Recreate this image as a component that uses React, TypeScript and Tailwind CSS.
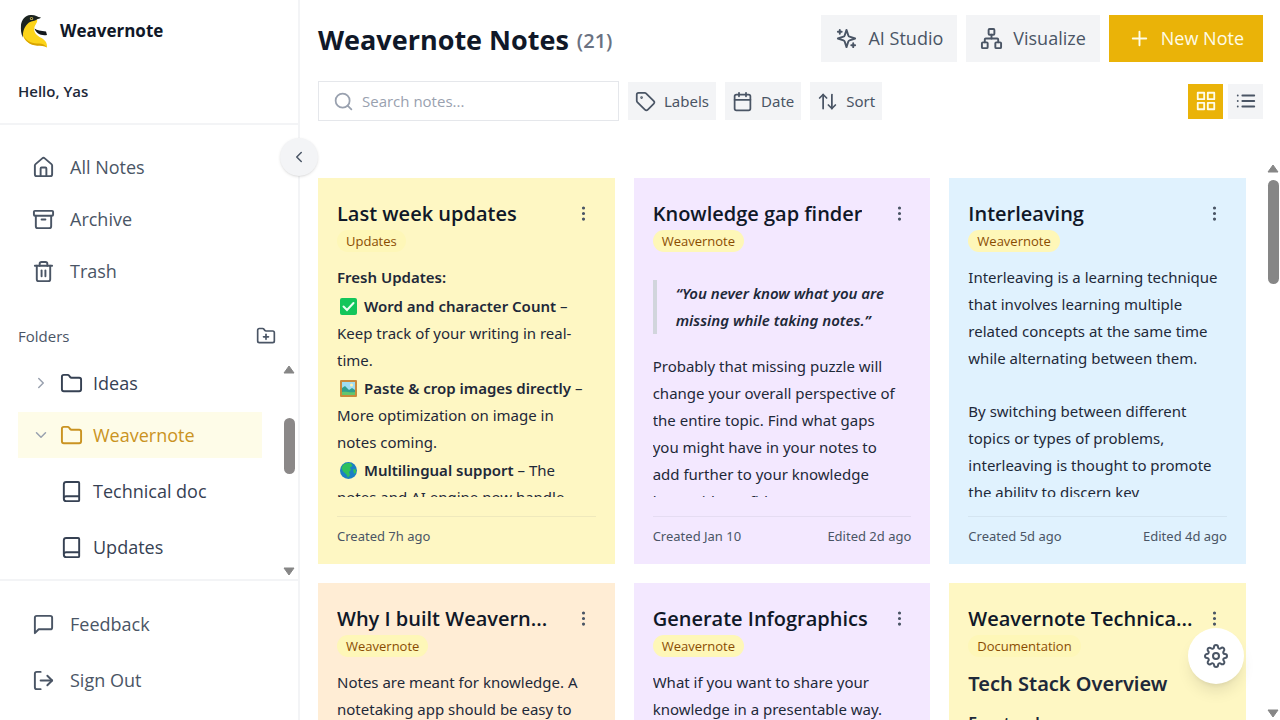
import type { ReactNode } from "react";
import {
  FiCalendar,
  FiChevronDown,
  FiChevronLeft,
  FiChevronRight,
  FiGrid,
  FiList,
  FiLogOut,
  FiMessageSquare,
  FiMoreVertical,
  FiPlus,
  FiSearch,
  FiSettings,
  FiTrash2,
} from "react-icons/fi";
import { Archive, ArrowUpDown, Book, Folder, FolderPlus, House, Network, Tag } from "lucide-react";

type Note = {
  title: string;
  label: string;
  color: string;
  created: string;
  edited?: string;
  body: ReactNode;
};

function Logo() {
  return (
    <svg width="28" height="34" viewBox="0 0 28 34" aria-hidden="true">
      <path
        d="M10 3C4 5 1.500 11 2 18C3 26 9 31 17 31C22 31 25 31.500 27 33.500C27.500 29 25 26 21.500 24C16 21.500 13 17.500 14.500 13C15.500 10 18 8 17 5.500Z"
        fill="#fcd41a"
      />
      <path d="M3 20C5 26 11 30 18 29.500C22 29.300 25 30.500 27 33.500C24 31.800 21 32 17 31.700C10 31.300 4.500 27 3 20Z" fill="#d9a400" />
      <path
        d="M21 3.500C17 3 15 .5 10.500 1C5 1.500 1.500 6 1 11C.7 16 1 20 3 23.500C2.500 17.500 4.500 12 9 8.500C12 6.500 15 7 16.500 5.700C18 4.800 20 4.500 21 3.500Z"
        fill="#1c2420"
      />
      <circle cx="11.500" cy="4.500" r="1.600" fill="#d8c35a" />
      <circle cx="11.500" cy="4.500" r=".8" fill="#111" />
      <path d="M14.500 14.500C17 16.500 21 17 26 17.500L27 21C21 22 16 19.500 14.500 14.500Z" fill="#14181c" />
    </svg>
  );
}

function Sparkles() {
  return (
    <svg
      width="23"
      height="23"
      viewBox="0 0 24 24"
      fill="none"
      stroke="currentColor"
      strokeWidth="2"
      strokeLinecap="round"
      strokeLinejoin="round"
      aria-hidden="true"
    >
      <path d="m12 3-1.912 5.813a2 2 0 0 1-1.275 1.275L3 12l5.813 1.912a2 2 0 0 1 1.275 1.275L12 21l1.912-5.813a2 2 0 0 1 1.275-1.275L21 12l-5.813-1.912a2 2 0 0 1-1.275-1.275L12 3Z" />
      <path d="M5 3v4M19 17v4M3 5h4M17 19h4" />
    </svg>
  );
}

function CheckEmoji() {
  return (
    <svg className="mr-[7px] ml-[3px] inline align-[-3px]" width="17" height="17" viewBox="0 0 17 17" role="img" aria-label="check">
      <rect width="17" height="17" rx="2" fill="#13c65b" />
      <path d="M3.500 8.500l3.500 3.500 6.500-7" fill="none" stroke="#e9fff1" strokeWidth="2" strokeLinecap="round" />
    </svg>
  );
}

function PictureEmoji() {
  return (
    <svg className="mr-[7px] ml-[3px] inline align-[-3px]" width="17" height="17" viewBox="0 0 17 17" role="img" aria-label="picture">
      <rect width="17" height="17" rx="1" fill="#c98a3c" />
      <rect x="2" y="2" width="13" height="13" fill="#9fdcf2" />
      <circle cx="11.500" cy="5" r="1.500" fill="#fff3b0" />
      <path d="M2 8l3-2 4 4 3-2 3 2v5H2z" fill="#2f9e8f" />
      <path d="M2 12c4-1 8 1 13 0v3H2z" fill="#63c56f" />
    </svg>
  );
}

function GlobeEmoji() {
  return (
    <svg className="mr-[7px] ml-[3px] inline align-[-3px]" width="17" height="17" viewBox="0 0 17 17" role="img" aria-label="globe">
      <circle cx="8.500" cy="8.500" r="8.500" fill="#1b7fc4" />
      <path d="M3 3C5 1 9 .5 11 1.500L12.500 4 10 5.500 11 8l-2 2 1 3-2 2.500L6 12 3 9.500 1.500 6z" fill="#2fc05c" />
      <path d="M13 7l3 .5v3L14 12z" fill="#2fc05c" />
    </svg>
  );
}

const notes: Note[] = [
  {
    title: "Last week updates",
    label: "Updates",
    color: "bg-[#fef7c3]",
    created: "7h ago",
    body: (
      <>
        <p className="font-semibold">Fresh Updates:</p>
        <p className="mt-0.5">
          <CheckEmoji />
          <strong className="font-semibold">Word and character Count</strong> – Keep track of your writing in real-time.
        </p>
        <p className="mt-px">
          <PictureEmoji />
          <strong className="font-semibold">Paste &amp; crop images directly</strong> – More optimization on image in notes coming.
        </p>
        <p className="mt-px">
          <GlobeEmoji />
          <strong className="font-semibold">Multilingual support</strong> – The notes and AI engine now handle
        </p>
      </>
    ),
  },
  {
    title: "Knowledge gap finder",
    label: "Weavernote",
    color: "bg-[#f3e8ff]",
    created: "Jan 10",
    edited: "2d ago",
    body: (
      <>
        <blockquote className="mt-4 mb-[19px] border-l-4 border-gray-300 pl-[19px] font-semibold italic">
          “You never know what you are missing while taking notes.”
        </blockquote>
        <p>
          Probably that missing puzzle will change your overall perspective of the entire topic. Find what gaps you might
          have in your notes to add further to your knowledge base with confidence to
        </p>
      </>
    ),
  },
  {
    title: "Interleaving",
    label: "Weavernote",
    color: "bg-[#e0f2fe]",
    created: "5d ago",
    edited: "4d ago",
    body: (
      <>
        <p>
          Interleaving is a learning technique that involves learning multiple related concepts at the same time while
          alternating between them.
        </p>
        <p className="mt-[26px]">
          By switching between different topics or types of problems, interleaving is thought to promote the ability to
          discern key
        </p>
      </>
    ),
  },
  {
    title: "Why I built Weavern...",
    label: "Weavernote",
    color: "bg-[#ffedd5]",
    created: "Jan 10",
    body: <p>Notes are meant for knowledge. A notetaking app should be easy to</p>,
  },
  {
    title: "Generate Infographics",
    label: "Weavernote",
    color: "bg-[#f3e8ff]",
    created: "Jan 10",
    body: <p>What if you want to share your knowledge in a presentable way.</p>,
  },
  {
    title: "Weavernote Technica...",
    label: "Documentation",
    color: "bg-[#fef7c3]",
    created: "Jan 10",
    body: (
      <>
        <h3 className="text-xl leading-[30px] font-semibold">Tech Stack Overview</h3>
        <h4 className="mt-3 text-base font-semibold">Frontend</h4>
      </>
    ),
  },
];

function NoteCard({ note }: { note: Note }) {
  return (
    <article className={`flex min-w-0 flex-col px-[19px] pt-[19px] pb-[18px] ${note.color}`}>
      <div className="flex h-[33px] items-center justify-between gap-2">
        <h2 className="truncate text-xl font-semibold text-gray-900">{note.title}</h2>
        <button type="button" aria-label="Note menu" className="flex w-6 shrink-0 justify-center text-gray-600">
          <FiMoreVertical size={19} />
        </button>
      </div>
      <span className="h-[22px] self-start rounded-full bg-[#fef7b8] px-[9px] text-[13px] leading-[22px] text-yellow-800">
        {note.label}
      </span>
      <div className="mt-3 h-[233px] overflow-hidden pr-2 font-['Noto_Sans',sans-serif] text-[15px] leading-[27px] text-gray-800">
        {note.body}
      </div>
      <footer className="mt-[19px] flex justify-between border-t border-gray-500/10 pt-[9px] font-['Noto_Sans',sans-serif] text-[13px] leading-5 text-gray-600">
        <span>Created {note.created}</span>
        {note.edited && <span>Edited {note.edited}</span>}
      </footer>
    </article>
  );
}

function NavItem({ icon, text }: { icon: ReactNode; text: string }) {
  return (
    <a href="#" className="flex h-[46px] items-center gap-[15px] px-[14px] text-gray-600">
      {icon}
      {text}
    </a>
  );
}

function ScrollArrow({ down }: { down?: boolean }) {
  return (
    <svg width="12" height="9" viewBox="0 0 12 9" className={down ? "mt-auto rotate-180" : ""} aria-hidden="true">
      <path d="M6 1L11 8H1Z" fill="#868686" stroke="#868686" strokeLinejoin="round" />
    </svg>
  );
}

function Sidebar() {
  return (
    <aside className="relative flex w-[300px] shrink-0 flex-col border-r-2 border-gray-100 text-[18px]">
      <div className="border-b-2 border-gray-100 px-[18px] pt-[14px] pb-[18px]">
        <div className="flex h-[34px] items-center gap-3 pl-[2px]">
          <Logo />
          <span className="text-[17px] font-bold text-gray-900">Weavernote</span>
        </div>
        <p className="mt-[30px] text-[15px] leading-[27px] font-semibold text-gray-800">Hello, Yas</p>
      </div>

      <nav className="flex flex-col gap-[6px] px-[18px] pt-[19px]">
        <NavItem icon={<House size={23} />} text="All Notes" />
        <NavItem icon={<Archive size={23} />} text="Archive" />
        <NavItem icon={<FiTrash2 size={23} />} text="Trash" />
      </nav>

      <div className="mt-7 flex h-7 items-center justify-between pr-[22px] pl-[18px] text-gray-600">
        <h2 className="text-[15px]">Folders</h2>
        <button type="button" aria-label="New folder">
          <FolderPlus size={20} />
        </button>
      </div>

      <div className="mt-[10px] flex min-h-0 flex-1">
        <div className="flex min-w-0 flex-1 flex-col gap-[10px] overflow-hidden pl-[18px] text-gray-700">
          <div className="flex flex-col gap-[6px]">
            <a href="#" className="flex h-[46px] items-center gap-[10px] px-[14px]">
              <FiChevronRight size={18} className="text-gray-400" />
              <Folder size={23} />
              Ideas
            </a>
            <a href="#" className="flex h-[46px] items-center gap-[10px] bg-yellow-50 px-[14px] text-[#ca9322]">
              <FiChevronDown size={18} className="text-gray-400" />
              <Folder size={23} />
              Weavernote
            </a>
          </div>
          <a href="#" className="flex h-[46px] shrink-0 items-center gap-[10px] pl-[42px]">
            <Book size={23} />
            Technical doc
          </a>
          <a href="#" className="flex h-[46px] shrink-0 items-center gap-[10px] pl-[42px]">
            <Book size={23} />
            Updates
          </a>
        </div>
        <div className="ml-[18px] flex w-[18px] flex-col items-center pt-[5px] pb-[3px]">
          <ScrollArrow />
          <div className="mt-11 h-14 w-[11px] shrink-0 rounded-full bg-[#8b8888]" />
          <ScrollArrow down />
        </div>
      </div>

      <div className="flex flex-col gap-[10px] border-t-2 border-gray-100 px-[18px] pt-5 pb-[17px]">
        <NavItem icon={<FiMessageSquare size={23} />} text="Feedback" />
        <NavItem icon={<FiLogOut size={23} />} text="Sign Out" />
      </div>

      <button
        type="button"
        aria-label="Collapse sidebar"
        className="absolute top-[138px] -right-5 flex size-[38px] items-center justify-center rounded-full bg-gray-100 text-gray-600 shadow-sm"
      >
        <FiChevronLeft size={18} />
      </button>
    </aside>
  );
}

function Toolbar() {
  const filter =
    "flex h-[38px] items-center gap-2 bg-gray-100 px-[7px] font-['Noto_Sans',sans-serif] text-[15px] text-gray-600";
  return (
    <header className="px-[18px] pt-[15px] pr-[17px]">
      <div className="flex h-[47px] items-center justify-between">
        <h1 className="flex items-center gap-2 pt-1 text-[27px] font-bold text-gray-900">
          Weavernote Notes
          <span className="text-[20px] font-semibold text-gray-500">(21)</span>
        </h1>
        <div className="flex h-full gap-[9px] text-[18px] text-gray-600">
          <button type="button" className="flex items-center gap-[10px] bg-gray-100 px-[14px]">
            <Sparkles />
            AI Studio
          </button>
          <button type="button" className="flex items-center gap-[10px] bg-gray-100 px-[14px]">
            <Network size={23} />
            Visualize
          </button>
          <button type="button" className="flex items-center gap-[10px] bg-[#eab308] px-[19px] text-yellow-50">
            <FiPlus size={23} />
            New Note
          </button>
        </div>
      </div>

      <div className="mt-[19px] flex items-center gap-[9px]">
        <label className="flex h-10 w-[301px] items-center gap-2 border border-gray-200 px-[14px]">
          <FiSearch size={21} className="shrink-0 text-gray-400" />
          <input
            type="text"
            aria-label="Search notes"
            placeholder="Search notes..."
            className="min-w-0 flex-1 text-[15px] outline-none placeholder:text-gray-400"
          />
        </label>
        <button type="button" className={filter}>
          <Tag size={21} />
          Labels
        </button>
        <button type="button" className={filter}>
          <FiCalendar size={21} />
          Date
        </button>
        <button type="button" className={filter}>
          <ArrowUpDown size={21} />
          Sort
        </button>
        <div className="ml-auto flex gap-[5px]">
          <button type="button" aria-label="Grid view" className="flex size-[35px] items-center justify-center bg-[#eab308] text-yellow-50">
            <FiGrid size={22} />
          </button>
          <button type="button" aria-label="List view" className="flex size-[35px] items-center justify-center bg-gray-100 text-gray-600">
            <FiList size={22} />
          </button>
        </div>
      </div>
    </header>
  );
}

export default function App() {
  return (
    <div className="flex h-screen overflow-hidden bg-white font-['Open_Sans',sans-serif]">
      <Sidebar />
      <div className="flex min-w-0 flex-1 flex-col">
        <Toolbar />
        <div className="mt-[38px] flex min-h-0 flex-1">
          <main className="min-w-0 flex-1 overflow-hidden pt-[19px] pr-5 pl-[18px]">
            <div className="grid grid-cols-3 gap-[19px]">
              {notes.map((note) => (
                <NoteCard key={note.title} note={note} />
              ))}
            </div>
          </main>
          <div className="flex w-[14px] flex-col items-center pt-[5px] pb-[2px]">
            <ScrollArrow />
            <div className="mt-[7px] h-[104px] w-[11px] shrink-0 rounded-full bg-[#868686]" />
            <ScrollArrow down />
          </div>
        </div>
      </div>
      <button
        type="button"
        aria-label="Settings"
        className="fixed right-9 bottom-9 flex size-14 items-center justify-center rounded-full bg-white text-gray-600 shadow-lg"
      >
        <FiSettings size={24} />
      </button>
    </div>
  );
}
